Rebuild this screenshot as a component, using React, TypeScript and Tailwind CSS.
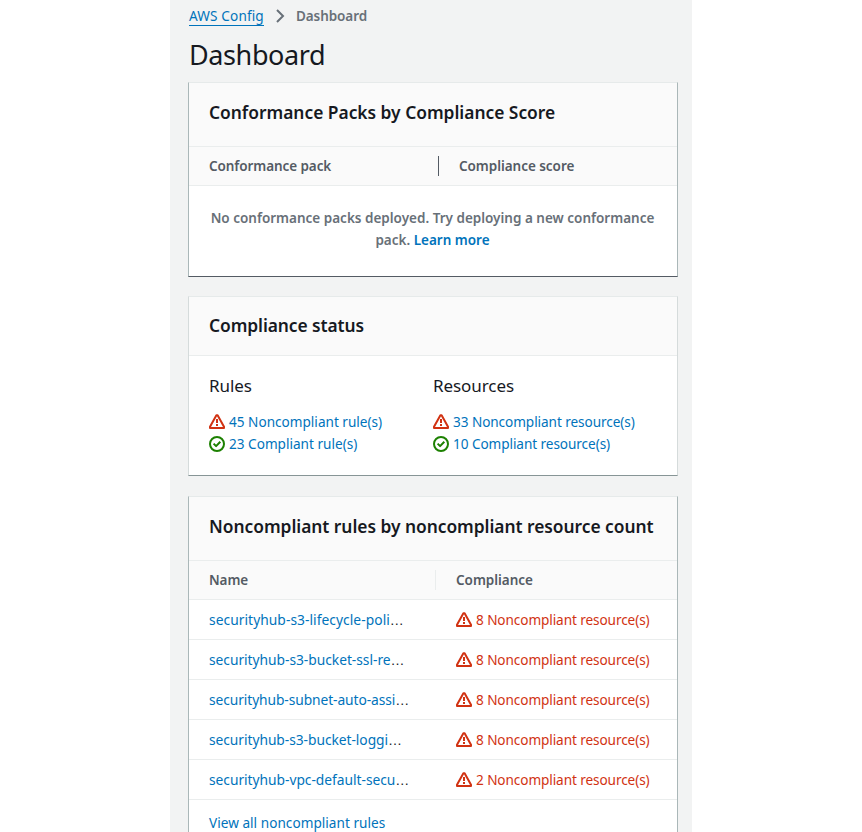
import type { ReactNode } from "react";

function WarningIcon() {
  return (
    <svg viewBox="0 0 16 16" className="h-4 w-4 shrink-0" fill="none" stroke="#d13212" strokeWidth="2" strokeLinejoin="round">
      <path d="M7.4 1.2h1.2L15 12.8V14H1v-1.2Z" />
      <path d="M8 5v4M8 10v2" />
    </svg>
  );
}

function SuccessIcon() {
  return (
    <svg viewBox="0 0 16 16" className="h-4 w-4 shrink-0" fill="none" stroke="#1d8102" strokeWidth="2">
      <circle cx="8" cy="8" r="7" />
      <path d="m4.6 7.6 2.5 2.5 4.2-4.4" strokeLinejoin="round" />
    </svg>
  );
}

function Card({ className, children }: { className: string; children: ReactNode }) {
  return (
    <section className={`w-[490px] border border-t-[#e6eaea] bg-white ${className}`}>{children}</section>
  );
}

function CardHeader({ className, children }: { className: string; children: ReactNode }) {
  return (
    <header className={`border-b border-[#eaeded] bg-[#fafafa] px-5 text-[17.4px]/[22px] font-semibold whitespace-nowrap text-[#16191f] ${className}`}>
      <h2>{children}</h2>
    </header>
  );
}

function StatusRow({ icon, children }: { icon: ReactNode; children: ReactNode }) {
  return (
    <li className="flex h-[22px] items-center gap-1">
      {icon}
      <a className="whitespace-nowrap text-[#0073bb]">{children}</a>
    </li>
  );
}

const rules = [
  { name: "securityhub-s3-lifecycle-poli", count: 8, tracking: "tracking-[0.05px]" },
  { name: "securityhub-s3-bucket-ssl-re", count: 8, tracking: "tracking-[-0.03px]" },
  { name: "securityhub-subnet-auto-assi", count: 8, tracking: "tracking-[-0.09px]" },
  { name: "securityhub-s3-bucket-loggi", count: 8, tracking: "tracking-[-0.05px]" },
  { name: "securityhub-vpc-default-secu", count: 2, tracking: "tracking-[-0.03px]" },
];

export default function App() {
  return (
    <div className="h-[832px] overflow-hidden bg-white pl-[170px] font-['Noto_Sans',sans-serif] text-[13.6px]/[22px] text-[#16191f]">
      <main className="h-full w-[522px] bg-[#f2f3f3] pt-[5px] pl-[18px]">
        <nav className="flex h-[22px] items-start pl-px">
          <a className="h-[21px] w-[75px] border-b border-[#0073bb] tracking-[0.13px] whitespace-nowrap text-[#0073bb]">AWS Config</a>
          <svg viewBox="0 0 16 16" className="mx-2 mt-[3px] h-4 w-4" fill="none" stroke="#687078" strokeWidth="2">
            <path d="m5 2 6 6-6 6" />
          </svg>
          <span className="text-[13.5px] font-semibold tracking-[-0.08px] text-[#687078]">Dashboard</span>
        </nav>
        <h1 className="mt-2.5 mb-[9px] pl-px text-[27px]/[36px] tracking-[-0.4px]">Dashboard</h1>

        <Card className="border-x-[#aab7b8] border-b-[#545b64]">
          <CardHeader className="h-16 pt-[18px] tracking-[-0.02px]">Conformance Packs by Compliance Score</CardHeader>
          <div className="flex h-[39px] items-center border-b border-[#eaeded] bg-[#fafafa] pl-5 text-[13.5px] font-semibold text-[#545b64]">
            <span className="w-[229px] tracking-[-0.08px]">Conformance pack</span>
            <span className="h-5 w-px bg-[#545b64]" />
            <span className="pl-5 tracking-[-0.04px]">Compliance score</span>
          </div>
          <p className="h-[90px] pt-[21px] pr-px text-center text-[13.5px] font-semibold text-[#687078]">
            No conformance packs deployed. Try deploying a new conformance
            <br />
            pack. <a className="text-[#0073bb]">Learn more</a>
          </p>
        </Card>

        <Card className="mt-[19px] border-x-[#d5dbdb] border-b-[#879596]">
          <CardHeader className="h-[59px] pt-[17px] tracking-[-0.09px]">Compliance status</CardHeader>
          <div className="flex h-[119px] px-5 pt-[19px]">
            <div className="w-56">
              <h3 className="mb-[14px] text-[17px]/[22px] tracking-[-0.08px]">Rules</h3>
              <ul>
                <StatusRow icon={<WarningIcon />}>45 Noncompliant rule(s)</StatusRow>
                <StatusRow icon={<SuccessIcon />}>23 Compliant rule(s)</StatusRow>
              </ul>
            </div>
            <div>
              <h3 className="mb-[14px] text-[17px]/[22px] tracking-[-0.08px]">Resources</h3>
              <ul className="tracking-[-0.07px]">
                <StatusRow icon={<WarningIcon />}>33 Noncompliant resource(s)</StatusRow>
                <StatusRow icon={<SuccessIcon />}>10 Compliant resource(s)</StatusRow>
              </ul>
            </div>
          </div>
        </Card>

        <Card className="mt-5 border-x-[#aab7b8] border-b-[#545b64]">
          <CardHeader className="h-16 pt-[18px] tracking-[-0.04px]">Noncompliant rules by noncompliant resource count</CardHeader>
          <div className="flex h-[39px] items-center border-b border-[#eaeded] bg-[#fafafa] pl-5 text-[13.5px] font-semibold text-[#545b64]">
            <span className="w-[226px] tracking-[-0.1px]">Name</span>
            <span className="h-5 w-px bg-[#eaeded]" />
            <span className="pl-5 tracking-[-0.03px]">Compliance</span>
          </div>
          {rules.map((rule) => (
            <div key={rule.name} className="flex h-10 items-center border-b border-[#eaeded] pl-5">
              <span className={`w-[247px] text-[13.8px] whitespace-nowrap ${rule.tracking}`}>
                <a className="text-[#0073bb]">{rule.name}</a>
                <span className="font-['Liberation_Sans',sans-serif] text-sm leading-none">…</span>
              </span>
              <span className="flex items-center gap-1 tracking-[-0.09px] whitespace-nowrap text-[#d13212]">
                <WarningIcon />
                {rule.count} Noncompliant resource(s)
              </span>
            </div>
          ))}
          <div className="h-12 pt-3 pl-5">
            <a className="tracking-[0.03px] text-[#0073bb]">View all noncompliant rules</a>
          </div>
        </Card>
      </main>
    </div>
  );
}
